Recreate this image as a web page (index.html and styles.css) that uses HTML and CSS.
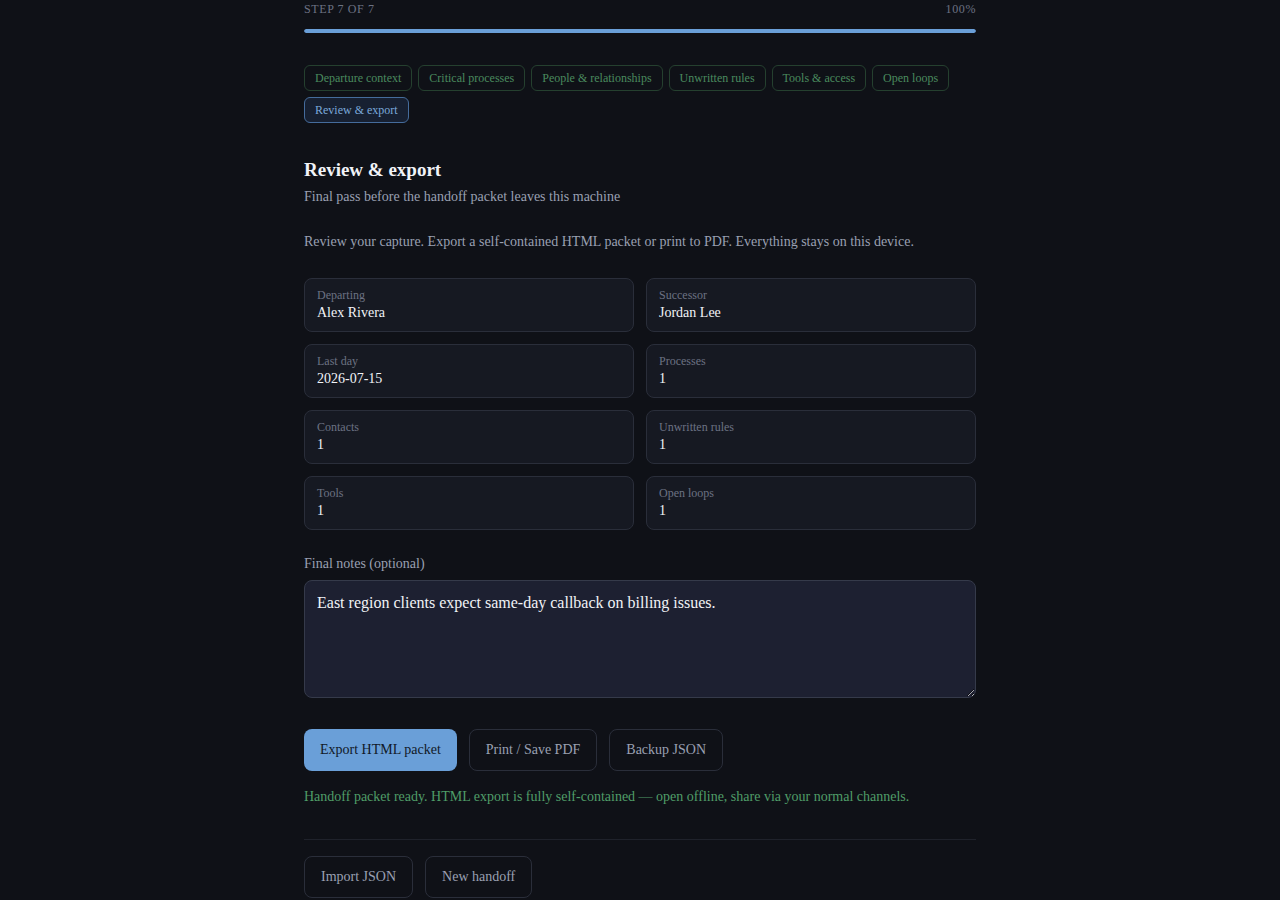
FILE: index.html
```html
<!DOCTYPE html>
<html lang="en">
<head>
<meta charset="utf-8">
<title>Review &amp; export</title>
<link rel="stylesheet" href="styles.css">
</head>
<body>
<main class="wrap">
  <div class="step-row">
    <span>STEP 7 OF 7</span>
    <span>100%</span>
  </div>
  <div class="progress"><div class="progress-fill" style="width:100%"></div></div>

  <nav class="chips">
    <button class="chip">Departure context</button>
    <button class="chip">Critical processes</button>
    <button class="chip">People &amp; relationships</button>
    <button class="chip">Unwritten rules</button>
    <button class="chip">Tools &amp; access</button>
    <button class="chip">Open loops</button>
    <button class="chip chip-active">Review &amp; export</button>
  </nav>

  <section class="section">
    <h2 class="title">Review &amp; export</h2>
    <p class="subtitle">Final pass before the handoff packet leaves this machine</p>
    <p class="intro">Review your capture. Export a self-contained HTML packet or print to PDF. Everything stays on this device.</p>

    <div class="grid">
      <div class="card"><div class="card-label">Departing</div><div class="card-value">Alex Rivera</div></div>
      <div class="card"><div class="card-label">Successor</div><div class="card-value">Jordan Lee</div></div>
      <div class="card"><div class="card-label">Last day</div><div class="card-value">2026-07-15</div></div>
      <div class="card"><div class="card-label">Processes</div><div class="card-value">1</div></div>
      <div class="card"><div class="card-label">Contacts</div><div class="card-value">1</div></div>
      <div class="card"><div class="card-label">Unwritten rules</div><div class="card-value">1</div></div>
      <div class="card"><div class="card-label">Tools</div><div class="card-value">1</div></div>
      <div class="card"><div class="card-label">Open loops</div><div class="card-value">1</div></div>
    </div>

    <label class="notes-label" for="notes">Final notes (optional)</label>
    <textarea id="notes" class="notes">East region clients expect same-day callback on billing issues.</textarea>

    <div class="actions">
      <button class="btn btn-primary">Export HTML packet</button>
      <button class="btn">Print / Save PDF</button>
      <button class="btn">Backup JSON</button>
    </div>
    <p class="status">Handoff packet ready. HTML export is fully self-contained — open offline, share via your normal channels.</p>

    <div class="divider"></div>
    <div class="actions">
      <button class="btn">Import JSON</button>
      <button class="btn">New handoff</button>
    </div>
  </section>
</main>
</body>
</html>
```

FILE: styles.css
```css
* { box-sizing: border-box; }
html, body {
  margin: 0;
  background: #0f1117;
  color: #e6e8ee;
  font-family: "Liberation Serif", "Times New Roman", serif;
}
.wrap {
  width: 672px;
  margin: 0 auto;
  padding-bottom: 40px;
}
.step-row {
  display: flex;
  justify-content: space-between;
  padding-top: 1px;
  font-size: 12px;
  line-height: 16px;
  color: #6c7283;
  letter-spacing: 0.6px;
}
.progress {
  margin-top: 12px;
  height: 4px;
  border-radius: 2px;
  background: #1f2330;
  overflow: hidden;
}
.progress-fill {
  height: 100%;
  background: #6a9fd8;
  border-radius: 2px;
}
.chips {
  margin-top: 32px;
  display: flex;
  flex-wrap: wrap;
  gap: 6px 6px;
}
.chip {
  font-family: inherit;
  font-size: 12px;
  height: 26px;
  padding: 0 10px;
  border-radius: 6px;
  border: 1px solid #25402f;
  background: transparent;
  color: #4a8a5e;
  cursor: pointer;
}
.chip-active {
  border-color: #456c9c;
  background: #172031;
  color: #7ba8da;
}
.section { padding-top: 34px; }
.title {
  margin: 0;
  font-size: 19px;
  line-height: 26px;
  font-weight: 700;
  color: #f1f3f7;
}
.subtitle {
  margin: 5px 0 0;
  font-size: 14px;
  line-height: 18px;
  color: #9aa0b2;
}
.intro {
  margin: 27px 0 0;
  font-size: 14px;
  line-height: 18px;
  color: #9aa0b2;
}
.grid {
  margin-top: 27px;
  display: grid;
  grid-template-columns: 1fr 1fr;
  gap: 12px 12px;
}
.card {
  border: 1px solid #2a2e3a;
  border-radius: 8px;
  background: #161922;
  padding: 9px 12px;
}
.card-label {
  font-size: 12px;
  line-height: 14px;
  color: #6c7283;
}
.card-value {
  margin-top: 2px;
  font-size: 14px;
  line-height: 18px;
  color: #f1f3f7;
}
.notes-label {
  display: block;
  margin-top: 25px;
  font-size: 14px;
  line-height: 18px;
  color: #9aa0b2;
}
.notes {
  display: block;
  margin-top: 7px;
  width: 100%;
  height: 118px;
  padding: 12px;
  background: #1d2031;
  border: 1px solid #353a4a;
  border-radius: 8px;
  color: #f1f3f7;
  font-family: inherit;
  font-size: 16px;
  line-height: 19px;
  resize: vertical;
  outline: none;
}
.actions {
  display: flex;
  gap: 12px;
  margin-top: 31px;
}
.btn {
  font-family: inherit;
  font-size: 14px;
  height: 42px;
  padding: 0 16px;
  border-radius: 8px;
  border: 1px solid #2a2e3a;
  background: transparent;
  color: #9aa0b2;
  cursor: pointer;
}
.btn-primary {
  background: #6a9fd8;
  border: none;
  color: #111827;
}
.status {
  margin: 17px 0 0;
  font-size: 14px;
  line-height: 18px;
  color: #4f9d68;
}
.divider {
  margin-top: 33px;
  height: 1px;
  background: #1f222b;
}
.divider + .actions { margin-top: 16px; }
```
